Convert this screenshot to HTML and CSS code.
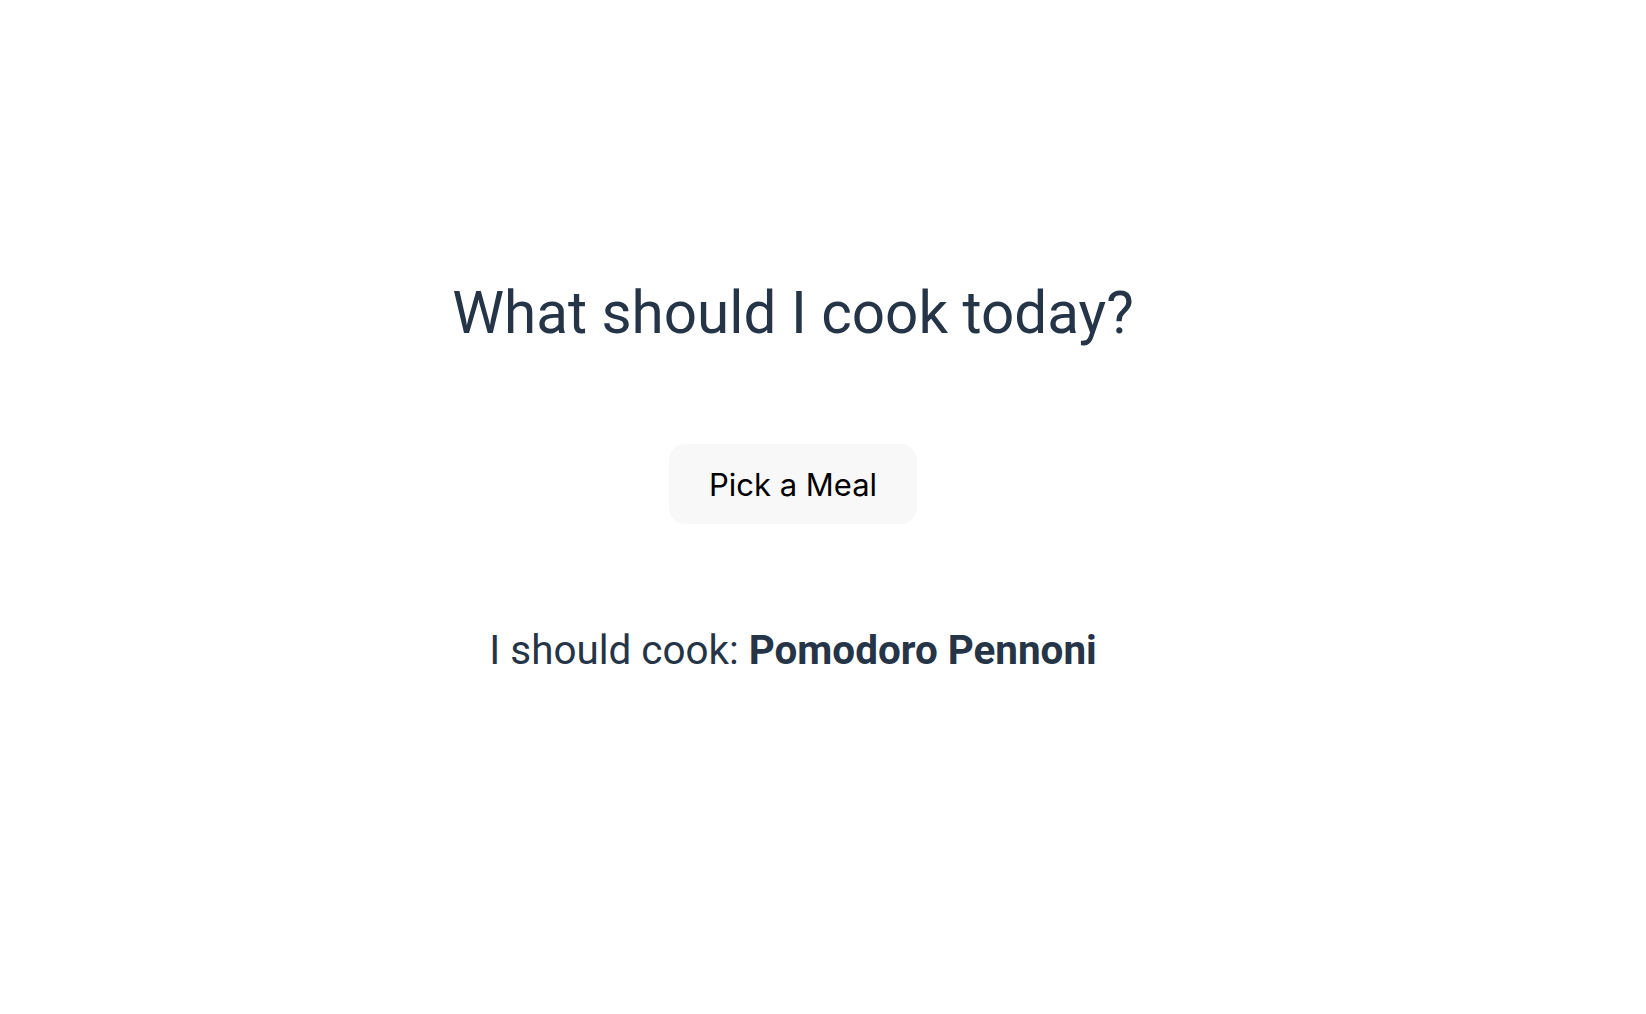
FILE: index.html
```html
<!DOCTYPE html>
<html lang="en">
<head>
<meta charset="utf-8">
<title>What should I cook today?</title>
<link rel="stylesheet" href="styles.css">
</head>
<body>
<main class="app">
  <h1 class="title">What should I cook today?</h1>
  <button class="pick-btn" type="button">Pick a Meal</button>
  <p class="result">I should cook: <strong>Pomodoro Pennoni</strong></p>
</main>
</body>
</html>
```
FILE: styles.css
```css
html, body {
  margin: 0;
  padding: 0;
  background: #ffffff;
}
body {
  font-family: Roboto, "Liberation Sans", Arial, sans-serif;
  color: #253547;
}
.app {
  box-sizing: border-box;
  width: 1586px;
  padding-top: 277px;
  display: flex;
  flex-direction: column;
  align-items: center;
}
.title {
  margin: 0;
  font-size: 58.4px;
  font-weight: 400;
  line-height: 72px;
}
.pick-btn {
  margin-top: 95px;
  width: 248px;
  height: 80px;
  border: none;
  border-radius: 16px;
  background: #f8f8f8;
  color: #000;
  font-family: Inter, Roboto, sans-serif;
  font-size: 31px;
  font-weight: 400;
  cursor: pointer;
}
.result {
  margin: 103px 0 0;
  font-size: 40.4px;
  line-height: 48px;
}
.result strong {
  font-weight: 700;
}
```
